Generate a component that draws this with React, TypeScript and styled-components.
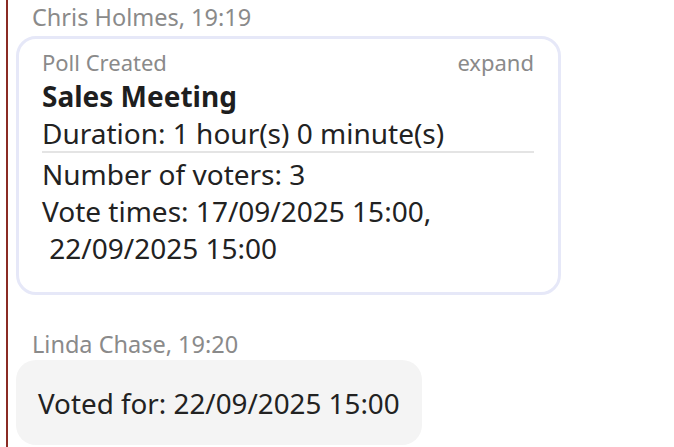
import React from "react";
import styled, { createGlobalStyle } from "styled-components";

const Global = createGlobalStyle`
  html, body { margin: 0; padding: 0; background: #ffffff; }
  body { font-family: "Noto Sans", "Open Sans", sans-serif; color: #222222; }
`;

const Thread = styled.div`
  margin-left: 6px;
  border-left: 2px solid #8a2b24;
  height: 447px;
  padding-left: 8px;
  box-sizing: border-box;
  display: flex;
  flex-direction: column;
  overflow: hidden;
`;

const Message = styled.div<{ $gap?: number }>`
  display: flex;
  flex-direction: column;
  align-items: flex-start;
  margin-top: ${(p) => p.$gap ?? 0}px;
`;

const Author = styled.div<{ $below: number }>`
  font-size: 23.5px;
  line-height: 28px;
  color: #8a8a8a;
  padding-left: 16px;
  margin-bottom: ${(p) => p.$below}px;
`;

const PollCard = styled.div`
  width: 545px;
  box-sizing: border-box;
  border: 3px solid #e6e8f8;
  border-radius: 20px;
  padding: 10px 24px 25px 23px;
  background: #ffffff;
`;

const PollTop = styled.div`
  display: flex;
  justify-content: space-between;
  font-size: 22px;
  line-height: 26px;
  color: #8a8a8a;
`;

const Title = styled.div`
  font-size: 28px;
  font-weight: 700;
  line-height: 38px;
  margin-top: 2px;
  color: #1e1e1e;
`;

const Line = styled.div`
  font-size: 28px;
  line-height: 37px;
  color: #222222;
`;

const DividedLine = styled(Line)`
  line-height: 36px;
  border-bottom: 2px solid #e4e4e4;
  margin-bottom: 3px;
`;

const Bubble = styled.div`
  background: #f4f4f4;
  border-radius: 20px;
  padding: 23px 22px 22px 22px;
  font-size: 27.8px;
  line-height: 40px;
  color: #222222;
`;

export default function App() {
  return (
    <>
      <Global />
      <Thread>
        <Message $gap={3}>
          <Author $below={5}>Chris Holmes, 19:19</Author>
          <PollCard>
            <PollTop>
              <span>Poll Created</span>
              <span>expand</span>
            </PollTop>
            <Title>Sales Meeting</Title>
            <DividedLine>Duration: 1 hour(s) 0 minute(s)</DividedLine>
            <Line>Number of voters: 3</Line>
            <Line>Vote times: 17/09/2025 15:00,</Line>
            <Line>&nbsp;22/09/2025 15:00</Line>
          </PollCard>
        </Message>
        <Message $gap={35}>
          <Author $below={2}>Linda Chase, 19:20</Author>
          <Bubble>Voted for: 22/09/2025 15:00</Bubble>
        </Message>
      </Thread>
    </>
  );
}
